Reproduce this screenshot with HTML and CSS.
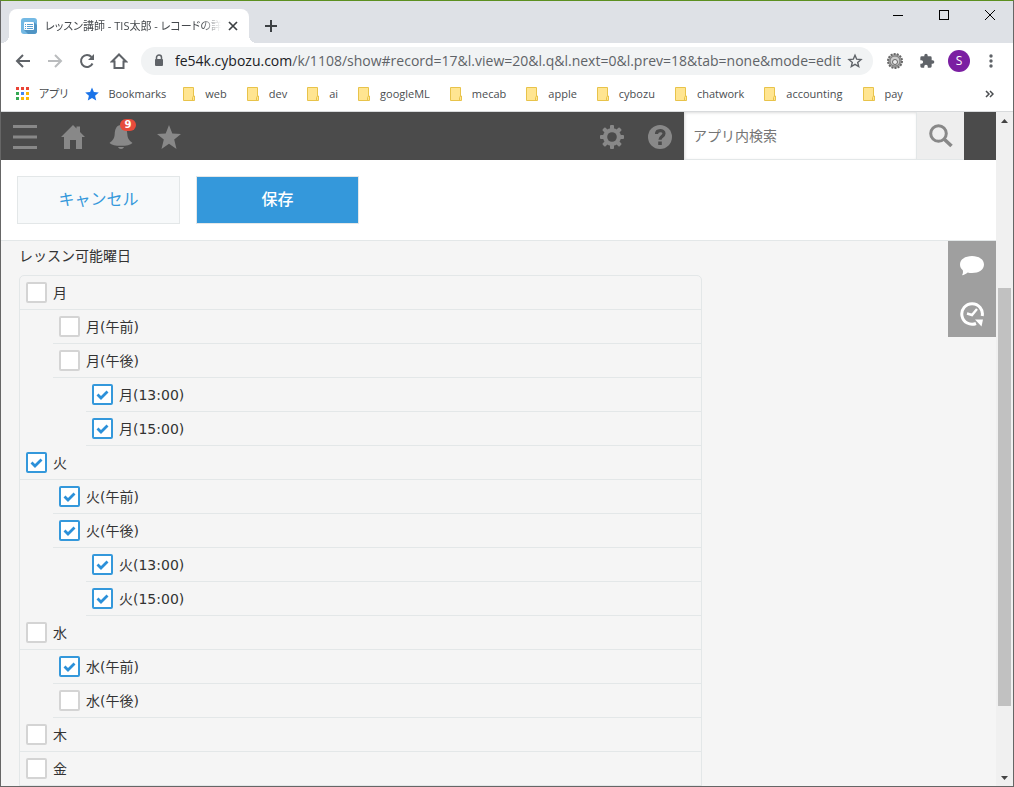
FILE: index.html
```html
<!DOCTYPE html>
<html lang="ja">
<head>
<meta charset="utf-8">
<title>レッスン講師 - TIS太郎 - レコードの詳細</title>
<link rel="stylesheet" href="styles.css">
</head>
<body>
<div class="window">
  <div class="tabstrip">
    <div class="tab">
      <svg class="favicon" width="16" height="16" viewBox="0 0 16 16"><rect width="16" height="16" rx="3" fill="#74b9e4"/><path d="M13 4l3 3v6a3 3 0 0 1-3 3H7l-4-4z" fill="#4f94c4"/><rect x="3" y="4" width="10" height="8" rx="1" fill="#fff"/><path d="M4 6.500h1M6 6.500h6M4 8.500h1M6 8.500h6M4 10.500h1M6 10.500h6" stroke="#5a9fd0"/></svg>
      <span class="tab-title">レッスン講師 - TIS太郎 - レコードの詳細</span>
      <button class="tab-close" aria-label="タブを閉じる"><svg width="10" height="10" viewBox="0 0 10 10"><path d="M1 1l8 8M9 1l-8 8" stroke="#3c4043" stroke-width="1.7"/></svg></button>
    </div>
    <button class="new-tab" aria-label="新しいタブ"><svg width="12" height="12" viewBox="0 0 12 12"><path d="M6 0v12M0 6h12" stroke="#3c4043" stroke-width="2"/></svg></button>
    <div class="window-controls">
      <button aria-label="最小化"><svg width="10" height="10" viewBox="0 0 10 10"><path d="M0 5.500h10" stroke="#000"/></svg></button>
      <button aria-label="最大化"><svg width="10" height="10" viewBox="0 0 10 10"><rect x=".5" y=".5" width="9" height="9" fill="none" stroke="#000"/></svg></button>
      <button aria-label="閉じる"><svg width="10" height="10" viewBox="0 0 10 10"><path d="M0 0l10 10M10 0L0 10" stroke="#000"/></svg></button>
    </div>
  </div>

  <div class="toolbar">
    <button aria-label="戻る"><svg width="16" height="16" viewBox="0 0 16 16"><path d="M15 8H2M8 2L2 8l6 6" fill="none" stroke="#5f6368" stroke-width="2"/></svg></button>
    <button aria-label="進む"><svg width="16" height="16" viewBox="0 0 16 16"><path d="M1 8h13M8 2l6 6-6 6" fill="none" stroke="#babcbe" stroke-width="2"/></svg></button>
    <button aria-label="再読み込み"><svg width="16" height="16" viewBox="0 0 16 16"><path d="M13.500 10.500A6 6 0 1 1 12.500 4" fill="none" stroke="#5f6368" stroke-width="2"/><path d="M15 1v6H9z" fill="#5f6368"/></svg></button>
    <button aria-label="ホーム"><svg width="18" height="18" viewBox="0 0 18 18"><path d="M2 9.500L9 2.500l7 7h-2.500V16h-9V9.500z" fill="none" stroke="#5f6368" stroke-width="2"/></svg></button>
    <div class="omnibox">
      <svg width="10" height="14" viewBox="0 0 10 14"><path d="M2.500 6V3.500a2.500 2.500 0 0 1 5 0V6" fill="none" stroke="#5f6368" stroke-width="1.500"/><rect x="1" y="5" width="8" height="7" rx="1" fill="#5f6368"/></svg>
      <span class="url"><span class="host">fe54k.cybozu.com</span>/k/1108/show#record=17&amp;l.view=20&amp;l.q&amp;l.next=0&amp;l.prev=18&amp;tab=none&amp;mode=edit</span>
      <button class="star" aria-label="ブックマークに追加"><svg width="16" height="16" viewBox="0 0 16 16"><path d="M8 2.200l1.700 4 4.300.4-3.300 2.800 1 4.200L8 11.400l-3.700 2.200 1-4.200L2 6.600l4.300-.4z" fill="none" stroke="#5f6368" stroke-width="1.400"/></svg></button>
    </div>
    <button aria-label="拡張機能"><svg width="18" height="18" viewBox="0 0 18 18"><circle cx="9" cy="9" r="7" fill="#a5a5a5" stroke="#686868" stroke-width="2" stroke-dasharray="2 1.140"/><circle cx="9" cy="9" r="5" fill="#ccc" stroke="#777"/><circle cx="9" cy="10" r="2.500" fill="#eee" stroke="#666"/></svg></button>
    <button aria-label="拡張機能の管理"><svg width="16" height="16" viewBox="0 0 24 24"><path d="M20.500 11H19V7a2 2 0 0 0-2-2h-4V3.500a2.500 2.500 0 0 0-5 0V5H4a2 2 0 0 0-2 2v3.800h1.500a2.700 2.700 0 0 1 0 5.400H2V20a2 2 0 0 0 2 2h3.800v-1.500a2.700 2.700 0 0 1 5.400 0V22H17a2 2 0 0 0 2-2v-4h1.500a2.500 2.500 0 0 0 0-5z" fill="#5f6368"/></svg></button>
    <button aria-label="プロフィール"><span class="avatar">S</span></button>
    <button aria-label="メニュー"><svg width="4" height="14" viewBox="0 0 4 14"><g fill="#5f6368"><circle cx="2" cy="2" r="1.700"/><circle cx="2" cy="7" r="1.700"/><circle cx="2" cy="12" r="1.700"/></g></svg></button>
  </div>

  <svg class="symbols"><defs><symbol id="folder" viewBox="0 0 12 14"><path d="M.5.5h10V9h1v4.500H.5z" fill="#ffe591" stroke="#e8c34a"/><path d="M9.500 13.500v-3l1-1.500" fill="none" stroke="#e8c34a"/></symbol></defs></svg>
  <nav class="bookmarks">
    <a href="#" class="shortcut"><svg width="14" height="14" viewBox="0 0 14 14"><path d="M0 0h3v3H0zM5 0h3v3H5zM10 0h3v3h-3z" fill="#ea4335"/><path d="M0 5h3v3H0zM0 10h3v3H0z" fill="#34a853"/><path d="M5 5h3v3H5z" fill="#4285f4"/><path d="M10 5h3v3h-3zM5 10h3v3H5zM10 10h3v3h-3z" fill="#fbb605"/></svg>アプリ</a>
    <a href="#" class="shortcut"><svg width="14" height="14" viewBox="0 0 14 14"><path d="M7 .5l1.900 4.600 4.900.4-3.700 3.200 1.100 4.800L7 11l-4.200 2.500 1.100-4.800L.2 5.500l4.900-.4z" fill="#1a73e8"/></svg>Bookmarks</a>
    <a href="#"><svg width="12" height="14"><use href="#folder"/></svg>web</a>
    <a href="#"><svg width="12" height="14"><use href="#folder"/></svg>dev</a>
    <a href="#"><svg width="12" height="14"><use href="#folder"/></svg>ai</a>
    <a href="#"><svg width="12" height="14"><use href="#folder"/></svg>googleML</a>
    <a href="#"><svg width="12" height="14"><use href="#folder"/></svg>mecab</a>
    <a href="#"><svg width="12" height="14"><use href="#folder"/></svg>apple</a>
    <a href="#"><svg width="12" height="14"><use href="#folder"/></svg>cybozu</a>
    <a href="#"><svg width="12" height="14"><use href="#folder"/></svg>chatwork</a>
    <a href="#"><svg width="12" height="14"><use href="#folder"/></svg>accounting</a>
    <a href="#"><svg width="12" height="14"><use href="#folder"/></svg>pay</a>
    <button class="more" aria-label="その他のブックマーク"><svg width="9" height="8" viewBox="0 0 9 8"><path d="M1 1l3 3-3 3M5 1l3 3-3 3" fill="none" stroke="#4a4d50" stroke-width="1.500"/></svg></button>
  </nav>

  <div class="viewport">
    <div class="app">
      <header class="app-header">
        <button class="menu-button" aria-label="メニュー"><svg width="24" height="24" viewBox="0 0 24 24"><path d="M0 1.500h24M0 12h24M0 22.500h24" stroke="#888" stroke-width="3"/></svg></button>
        <button aria-label="ホーム"><svg width="24" height="24" viewBox="0 0 24 24"><path d="M12 0l3.500 3.500V1.500H19V7l5 5h-3v12h-6v-9H9v9H3V12H0z" fill="#888"/></svg></button>
        <button class="bell" aria-label="通知 9件"><svg width="24" height="24" viewBox="0 0 24 24"><path d="M12 0c4.500 0 6 4 6.300 9 .2 4.500 2 6.500 5.200 9-2 2-6 2.800-11.500 2.800S2.500 20 .5 18c3.200-2.500 5-4.500 5.200-9C6 4 7.500 0 12 0z" fill="#888"/><path d="M9 22h6c-.5 1.300-1.500 2-3 2s-2.500-.7-3-2z" fill="#888"/></svg><span class="badge">9</span></button>
        <button aria-label="お気に入り"><svg width="24" height="24" viewBox="0 0 24 24"><path d="M12 0l3.300 8.500 8.700.5-6.800 5.600L19.500 24 12 18.700 4.500 24l2.300-9.400L0 9l8.700-.5z" fill="#888"/></svg></button>
        <span class="grow"></span>
        <button aria-label="設定"><svg width="24" height="24" viewBox="-12 -12 24 24"><g fill="#888"><rect id="tooth" x="-2" y="-12" width="4" height="24" rx="1"/><use href="#tooth" transform="rotate(45)"/><use href="#tooth" transform="rotate(90)"/><use href="#tooth" transform="rotate(135)"/><circle r="9"/></g><circle r="4.800" fill="#4b4b4b"/></svg></button>
        <button aria-label="ヘルプ"><svg width="24" height="24" viewBox="0 0 24 24"><circle cx="12" cy="12" r="12" fill="#888"/><path d="M8.500 9c0-4.500 7.500-4.500 7.500-.5 0 3-4 3-4 6.200" fill="none" stroke="#4b4b4b" stroke-width="3.200"/><rect x="10.200" y="16.500" width="3.600" height="3.500" fill="#4b4b4b"/></svg></button>
        <form class="search">
          <input type="text" aria-label="アプリ内検索" placeholder="アプリ内検索">
          <button type="button" aria-label="検索"><svg width="24" height="24" viewBox="0 0 24 24"><circle cx="9.500" cy="9.500" r="7.800" fill="none" stroke="#888" stroke-width="3"/><path d="M15 15l7.500 7" stroke="#888" stroke-width="3.600"/></svg></button>
        </form>
      </header>
      <div class="actions">
        <button class="cancel">キャンセル</button>
        <button class="save">保存</button>
      </div>
      <main class="record">
        <form class="field">
          <h2 id="days">レッスン可能曜日</h2>
          <ul class="tree" aria-labelledby="days">
            <li><label><input type="checkbox">月</label>
              <ul>
                <li><label><input type="checkbox">月(午前)</label></li>
                <li><label><input type="checkbox">月(午後)</label>
                  <ul>
                    <li><label><input type="checkbox" checked>月(13:00)</label></li>
                    <li><label><input type="checkbox" checked>月(15:00)</label></li>
                  </ul>
                </li>
              </ul>
            </li>
            <li><label><input type="checkbox" checked>火</label>
              <ul>
                <li><label><input type="checkbox" checked>火(午前)</label></li>
                <li><label><input type="checkbox" checked>火(午後)</label>
                  <ul>
                    <li><label><input type="checkbox" checked>火(13:00)</label></li>
                    <li><label><input type="checkbox" checked>火(15:00)</label></li>
                  </ul>
                </li>
              </ul>
            </li>
            <li><label><input type="checkbox">水</label>
              <ul>
                <li><label><input type="checkbox" checked>水(午前)</label></li>
                <li><label><input type="checkbox">水(午後)</label></li>
              </ul>
            </li>
            <li><label><input type="checkbox">木</label></li>
            <li><label><input type="checkbox">金</label></li>
          </ul>
        </form>
        <aside class="side">
          <button aria-label="コメント"><svg width="24" height="20" viewBox="0 0 24 20"><path d="M12 0c7 0 12 3.500 12 8.500S19 17 12 17c-1.500 0-3-.1-4.300-.5C6 18 4 19 2 19.300c1-1.500 1.200-3.300.8-5C1 12.800 0 10.800 0 8.500 0 3.500 5 0 12 0z" fill="#fff"/></svg></button>
          <button aria-label="変更履歴"><svg width="24" height="26" viewBox="0 0 24 26"><path d="M22.200 15A10.300 10.300 0 1 0 16 22.500" fill="none" stroke="#fff" stroke-width="3"/><path d="M15 18.500h8l-1.500 7z" fill="#fff"/><path d="M7 12.500l5 1.500 5-6" fill="none" stroke="#fff" stroke-width="2.400"/></svg></button>
        </aside>
      </main>
    </div>
    <div class="scrollbar">
      <button aria-label="上へ"><svg width="7" height="4" viewBox="0 0 7 4"><path d="M3.500 0L7 4H0z" fill="#444"/></svg></button>
      <span class="before"></span><span class="thumb"></span><span class="after"></span>
      <button aria-label="下へ"><svg width="7" height="4" viewBox="0 0 7 4"><path d="M3.500 4L7 0H0z" fill="#444"/></svg></button>
    </div>
  </div>
</div>
</body>
</html>
```
FILE: styles.css
```css
* { box-sizing: border-box; }
body {
  margin: 0;
  font-family: "DejaVu Sans", "Noto Sans CJK JP", sans-serif;
  font-size: 14px;
  line-height: 20px;
  color: #333;
}
button {
  display: flex;
  align-items: center;
  justify-content: center;
  padding: 0;
  border: 0;
  background: none;
  font: inherit;
}
svg { flex: none; }
.symbols { display: none; }
.window {
  display: flex;
  flex-direction: column;
  height: 100vh;
  overflow: hidden;
  border: 1px solid #666;
  border-top-color: #5c9020;
  background: #fff;
}
.tabstrip, .toolbar, .bookmarks {
  flex: none;
  display: flex;
  font-family: "Open Sans", "Noto Sans CJK JP", sans-serif;
}

/* tab strip */
.tabstrip { height: 42px; padding-left: 8px; background: #dee1e6; }
.tab {
  position: relative;
  display: flex;
  align-items: center;
  width: 240px;
  height: 34px;
  margin-top: 8px;
  padding: 0 10px 0 12px;
  border-radius: 8px 8px 0 0;
  background: #fff;
}
.tab::before, .tab::after {
  content: "";
  position: absolute;
  bottom: 0;
  width: 8px;
  height: 8px;
}
.tab::before { left: -8px; background: radial-gradient(circle at 0 0, #dee1e6 8px, #fff 8px); }
.tab::after { right: -8px; background: radial-gradient(circle at 100% 0, #dee1e6 8px, #fff 8px); }
.tab-title {
  flex: 1;
  margin: 0 6px 0 8px;
  overflow: hidden;
  white-space: nowrap;
  font-size: 11px;
  font-feature-settings: "palt";
  color: #45494d;
  -webkit-mask-image: linear-gradient(to left, transparent, #000 20px);
  mask-image: linear-gradient(to left, transparent, #000 20px);
}
.tab-close { width: 12px; height: 16px; }
.new-tab { width: 28px; height: 28px; margin: 11px 0 0 8px; }
.window-controls { display: flex; margin-left: auto; }
.window-controls button { width: 46px; height: 28px; }

/* toolbar */
.toolbar { align-items: center; height: 36px; padding: 0 6px; }
.toolbar > button { width: 32px; height: 28px; }
.omnibox {
  flex: 1;
  display: flex;
  align-items: center;
  min-width: 0;
  height: 28px;
  margin: 0 6px;
  padding: 0 10px 0 13px;
  border-radius: 14px;
  background: #f1f3f4;
}
.url {
  flex: 1;
  margin-left: 11px;
  overflow: hidden;
  white-space: nowrap;
  font-size: 14px;
  line-height: 20px;
  color: #5f6368;
}
.host { color: #202124; }
.avatar {
  width: 22px;
  height: 22px;
  border-radius: 50%;
  background: #7b1fa2;
  color: #fff;
  font-size: 12px;
  line-height: 22px;
}

/* bookmarks bar */
.bookmarks {
  align-items: center;
  height: 33px;
  padding: 0 19px 2px 15px;
  border-bottom: 1px solid #d8dadc;
}
.bookmarks a {
  display: flex;
  align-items: center;
  gap: 10px;
  margin-right: 20px;
  font-size: 11px;
  color: #4a4d50;
  text-decoration: none;
  white-space: nowrap;
}
.bookmarks .shortcut { gap: 9px; margin-right: 17px; font-feature-settings: "palt"; }
.more { margin-left: auto; }

/* page */
.viewport { flex: 1; display: flex; min-height: 0; }
.app { flex: 1; display: flex; flex-direction: column; min-width: 0; background: #f5f5f5; }
.app-header { flex: none; display: flex; height: 48px; padding-right: 32px; background: #4b4b4b; }
.app-header > button { width: 48px; height: 48px; padding-top: 1px; }
.bell { position: relative; }
.badge {
  position: absolute;
  top: 7px;
  left: 23px;
  width: 16px;
  height: 12px;
  border-radius: 6px;
  background: #e74c3c;
  color: #fff;
  font-size: 10px;
  font-weight: bold;
  line-height: 12px;
}
.grow { flex: 1; }
.search { display: flex; width: 280px; }
.search input {
  flex: 1;
  min-width: 0;
  padding: 0 9px;
  border: 1px solid #e3e7e8;
  border-width: 0 1px 1px 0;
  border-radius: 0;
  background: #fff;
  box-shadow: inset 1px 1px 3px #ddd;
  font: inherit;
}
.search input::placeholder { color: #757575; }
.search button { width: 47px; border-bottom: 1px solid #e3e7e8; background: #eee; }
.actions {
  flex: none;
  display: flex;
  gap: 16px;
  padding: 16px;
  border-bottom: 1px solid #e3e7e8;
  background: #fff;
}
.actions button { width: 163px; height: 48px; border: 1px solid #e3e7e8; font-size: 16px; }
.actions .cancel { background: #f7f9fa; color: #3498db; }
.actions .save { background: #3498db; color: #fff; font-weight: 500; }
.record { flex: 1; display: flex; justify-content: space-between; min-height: 0; overflow: hidden; }
.field { flex: 0 1 701px; padding-left: 18px; }
.field h2 { margin: 4px 0 8px; font-size: 14px; font-weight: normal; line-height: 22px; }
.tree { border: 1px solid #e3e7e8; border-radius: 5px 5px 0 0; }
.tree, .tree ul { margin: 0; padding: 0; list-style: none; }
.tree ul { padding-left: 33px; }
.tree label {
  display: flex;
  align-items: center;
  gap: 6px;
  height: 34px;
  padding-left: 6px;
  border-bottom: 1px solid #e3e7e8;
}
.tree input {
  appearance: none;
  width: 21px;
  height: 21px;
  margin: 0;
  border: 2px solid #d4d4d4;
  border-radius: 2px;
  background: #fff;
}
.tree input:checked {
  border-color: #3498db;
  background: #fff url("data:image/svg+xml,%3Csvg xmlns='http://www.w3.org/2000/svg' viewBox='0 0 17 17'%3E%3Cpath d='M3.500 8.500l3.500 3.500 6.500-6.500' fill='none' stroke='%232b90d9' stroke-width='2.800'/%3E%3C/svg%3E") center / 17px;
}
.side { align-self: flex-start; background: #9f9f9f; }
.side button { width: 48px; height: 48px; padding-top: 2px; }

/* scrollbar */
.scrollbar { flex: none; display: flex; flex-direction: column; width: 17px; background: #f0f0f0; }
.scrollbar button { height: 17px; }
.before { flex: 159; }
.thumb { flex: 418; margin: 0 2px; background: #c1c1c1; }
.after { flex: 63; }
```
